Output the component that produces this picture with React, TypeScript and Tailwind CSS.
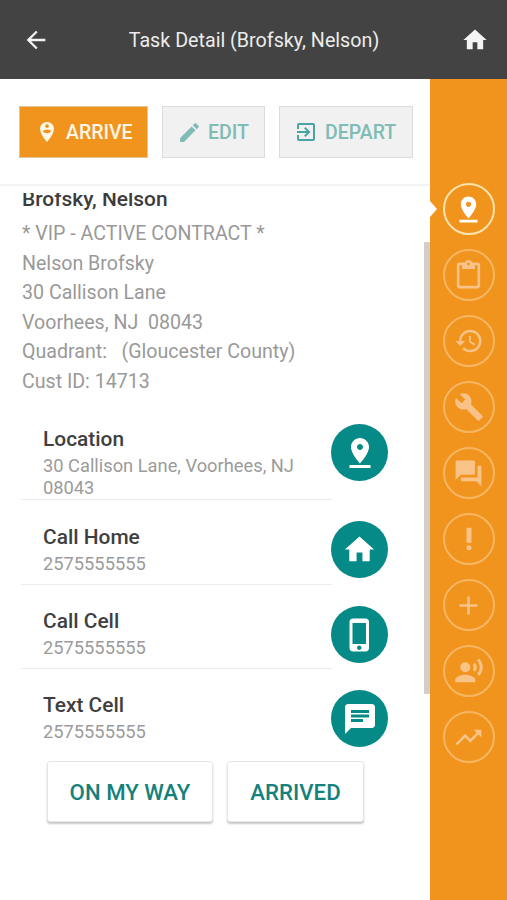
import React from "react";
import type { IconType } from "react-icons";
import {
  MdAdd,
  MdArrowBack,
  MdBuild,
  MdChat,
  MdContentPaste,
  MdEdit,
  MdExitToApp,
  MdHistory,
  MdHome,
  MdPhoneIphone,
  MdPriorityHigh,
  MdQuestionAnswer,
  MdRecordVoiceOver,
  MdTrendingUp,
} from "react-icons/md";

type Icon = IconType | ((props: { size: number }) => React.ReactElement);

function PinDrop({ size }: { size: number }) {
  return (
    <svg width={size} height={size} viewBox="0 0 24 24" fill="currentColor">
      <path d="M18 8c0-3.31-2.69-6-6-6S6 4.69 6 8c0 4.5 6 11 6 11s6-6.5 6-11zm-8 0c0-1.1.9-2 2-2s2 .9 2 2-.89 2-2 2c-1.1 0-2-.9-2-2zM5 20v2h14v-2H5z" />
    </svg>
  );
}

function PersonPin({ size }: { size: number }) {
  return (
    <svg width={size} height={size} viewBox="0 0 24 24" fill="currentColor">
      <path d="M12 2C8.14 2 5 5.14 5 9c0 5.25 7 13 7 13s7-7.75 7-13c0-3.86-3.14-7-7-7zm0 2.2c1.1 0 1.9.9 1.9 1.9 0 1.1-.9 1.9-1.9 1.9s-1.9-.8-1.9-1.9c0-1 .9-1.9 1.9-1.9zm0 9.1c-1.67 0-3.14-.85-4-2.15.02-1.1 2.67-1.35 4-1.35s3.98.25 4 1.35c-.86 1.3-2.33 2.15-4 2.15z" />
    </svg>
  );
}

const details = [
  "* VIP - ACTIVE CONTRACT *",
  "Nelson Brofsky",
  "30 Callison Lane",
  "Voorhees, NJ  08043",
  "Quadrant:   (Gloucester County)",
  "Cust ID: 14713",
];

const contacts: { title: string; text: string; Icon: Icon; size: number; row: string; pad: string }[] = [
  { title: "Location", text: "30 Callison Lane, Voorhees, NJ 08043", Icon: PinDrop, size: 36, row: "h-[86px]", pad: "pt-[13px]" },
  { title: "Call Home", text: "2575555555", Icon: MdHome, size: 35, row: "h-[85px]", pad: "pt-[25px]" },
  { title: "Call Cell", text: "2575555555", Icon: MdPhoneIphone, size: 36, row: "h-[84px]", pad: "pt-[24px]" },
  { title: "Text Cell", text: "2575555555", Icon: MdChat, size: 36, row: "h-[92px]", pad: "pt-[24px]" },
];

const tabs: { name: string; Icon: Icon; size: number }[] = [
  { name: "Location", Icon: PinDrop, size: 31 },
  { name: "Tasks", Icon: MdContentPaste, size: 31 },
  { name: "History", Icon: MdHistory, size: 30 },
  { name: "Service", Icon: MdBuild, size: 30 },
  { name: "Notes", Icon: MdQuestionAnswer, size: 31 },
  { name: "Priority", Icon: MdPriorityHigh, size: 30 },
  { name: "Add", Icon: MdAdd, size: 31 },
  { name: "Voice", Icon: MdRecordVoiceOver, size: 30 },
  { name: "Trends", Icon: MdTrendingUp, size: 31 },
];

function Header() {
  return (
    <header className="flex h-[79px] shrink-0 items-center justify-between bg-[#434343] pr-[18px] pl-[22px] text-[#f4f4f4]">
      <MdArrowBack size={28} />
      <h1 className="-ml-[3px] pt-[3px] text-[19.7px] whitespace-nowrap text-[#ececec]">Task Detail (Brofsky, Nelson)</h1>
      <MdHome size={28} />
    </header>
  );
}

function Toolbar() {
  return (
    <div className="flex h-[107px] shrink-0 items-start gap-[14px] border-b-2 border-[#f3f3f3] pt-[27px] pl-[19px] text-[19.5px] font-medium">
      <button className="flex h-[52px] w-[129px] items-center gap-[7px] border border-[#e0c49a] bg-[#f0941d] pl-[15px] text-[#fff6e6]">
        <PersonPin size={24} />
        <span className="pt-[2px]">ARRIVE</span>
      </button>
      <button className="flex h-[52px] w-[103px] items-center gap-[6px] border border-[#dcdcdc] bg-[#f1f1f1] pl-[14px] text-[#80bcb5]">
        <MdEdit size={25} />
        <span className="pt-[2px]">EDIT</span>
      </button>
      <button className="flex h-[52px] w-[134px] items-center gap-[7px] border border-[#dcdcdc] bg-[#f1f1f1] pl-[14px] text-[#80bcb5]">
        <MdExitToApp size={24} className="-mt-px text-[#4aa39e]" />
        <span className="pt-[2px]">DEPART</span>
      </button>
    </div>
  );
}

function Contacts() {
  return (
    <ul className="mt-[18px] pl-[21px]">
      {contacts.map(({ title, text, Icon, size, row, pad }, i) => (
        <li key={title} className={`flex ${row}`}>
          <div className={`w-[311px] pl-[22px] ${i < 3 ? "border-b border-[#ececec]" : ""} ${pad}`}>
            <h3 className="text-[20.9px] leading-[24px] font-medium text-[#3f3f3f]">{title}</h3>
            <p className="mt-[4px] w-[270px] text-[18.3px] leading-[21.5px] text-[#9b9b9b]">{text}</p>
          </div>
          <div className={`-ml-px flex size-[57px] shrink-0 items-center justify-center rounded-full bg-[#058a87] text-white ${i === 0 ? "mt-[10px]" : "mt-[21px]"}`}>
            <Icon size={size} />
          </div>
        </li>
      ))}
    </ul>
  );
}

function Content() {
  return (
    <main className="relative flex min-h-0 grow flex-col pt-[7px]">
      <div className="min-h-0 grow overflow-hidden">
        <h2 className="-mt-[7px] pl-[22px] text-[20.9px] leading-[26px] font-medium text-[#3c3c3c]">Brofsky, Nelson</h2>
        <div className="mt-[7px] pl-[22px]">
          {details.map((line) => (
            <p key={line} className="text-[19.6px] leading-[29.5px] whitespace-pre text-[#999999]">{line}</p>
          ))}
        </div>
        <Contacts />
        <div className="flex gap-[14px] pl-[47px] text-[22.2px] font-medium text-[#14817c]">
          <button className="h-[61px] w-[166px] rounded-[3px] border border-[#e6e6e6] bg-white pt-[2px] shadow-[0_2px_2px_rgba(0,0,0,0.22)]">ON MY WAY</button>
          <button className="h-[61px] w-[137px] rounded-[3px] border border-[#e6e6e6] bg-white pt-[2px] shadow-[0_2px_2px_rgba(0,0,0,0.22)]">ARRIVED</button>
        </div>
      </div>
      <div className="absolute top-[56px] right-0 h-[452px] w-[6px] bg-[#d2cdcb]" />
    </main>
  );
}

function Sidebar() {
  return (
    <nav className="relative flex w-[77px] shrink-0 flex-col items-center gap-[14px] bg-[#f0941d] pt-[104px]">
      <div className="absolute top-[122px] left-0 h-4 w-[7px] bg-white [clip-path:polygon(0_0,100%_50%,0_100%)]" />
      {tabs.map(({ name, Icon, size }, i) => (
        <button
          key={name}
          aria-label={name}
          className={`flex size-[52px] shrink-0 items-center justify-center rounded-full border-2 ${
            i === 0 ? "border-[#ffe3ad] text-white" : "border-[#f7b663] text-[#f9c286]"
          }`}
        >
          <Icon size={size} />
        </button>
      ))}
    </nav>
  );
}

export default function App() {
  return (
    <div className="flex h-[900px] w-[507px] flex-col overflow-hidden bg-white font-[Roboto,sans-serif]">
      <Header />
      <div className="flex min-h-0 grow">
        <div className="flex w-[430px] shrink-0 flex-col">
          <Toolbar />
          <Content />
        </div>
        <Sidebar />
      </div>
    </div>
  );
}
